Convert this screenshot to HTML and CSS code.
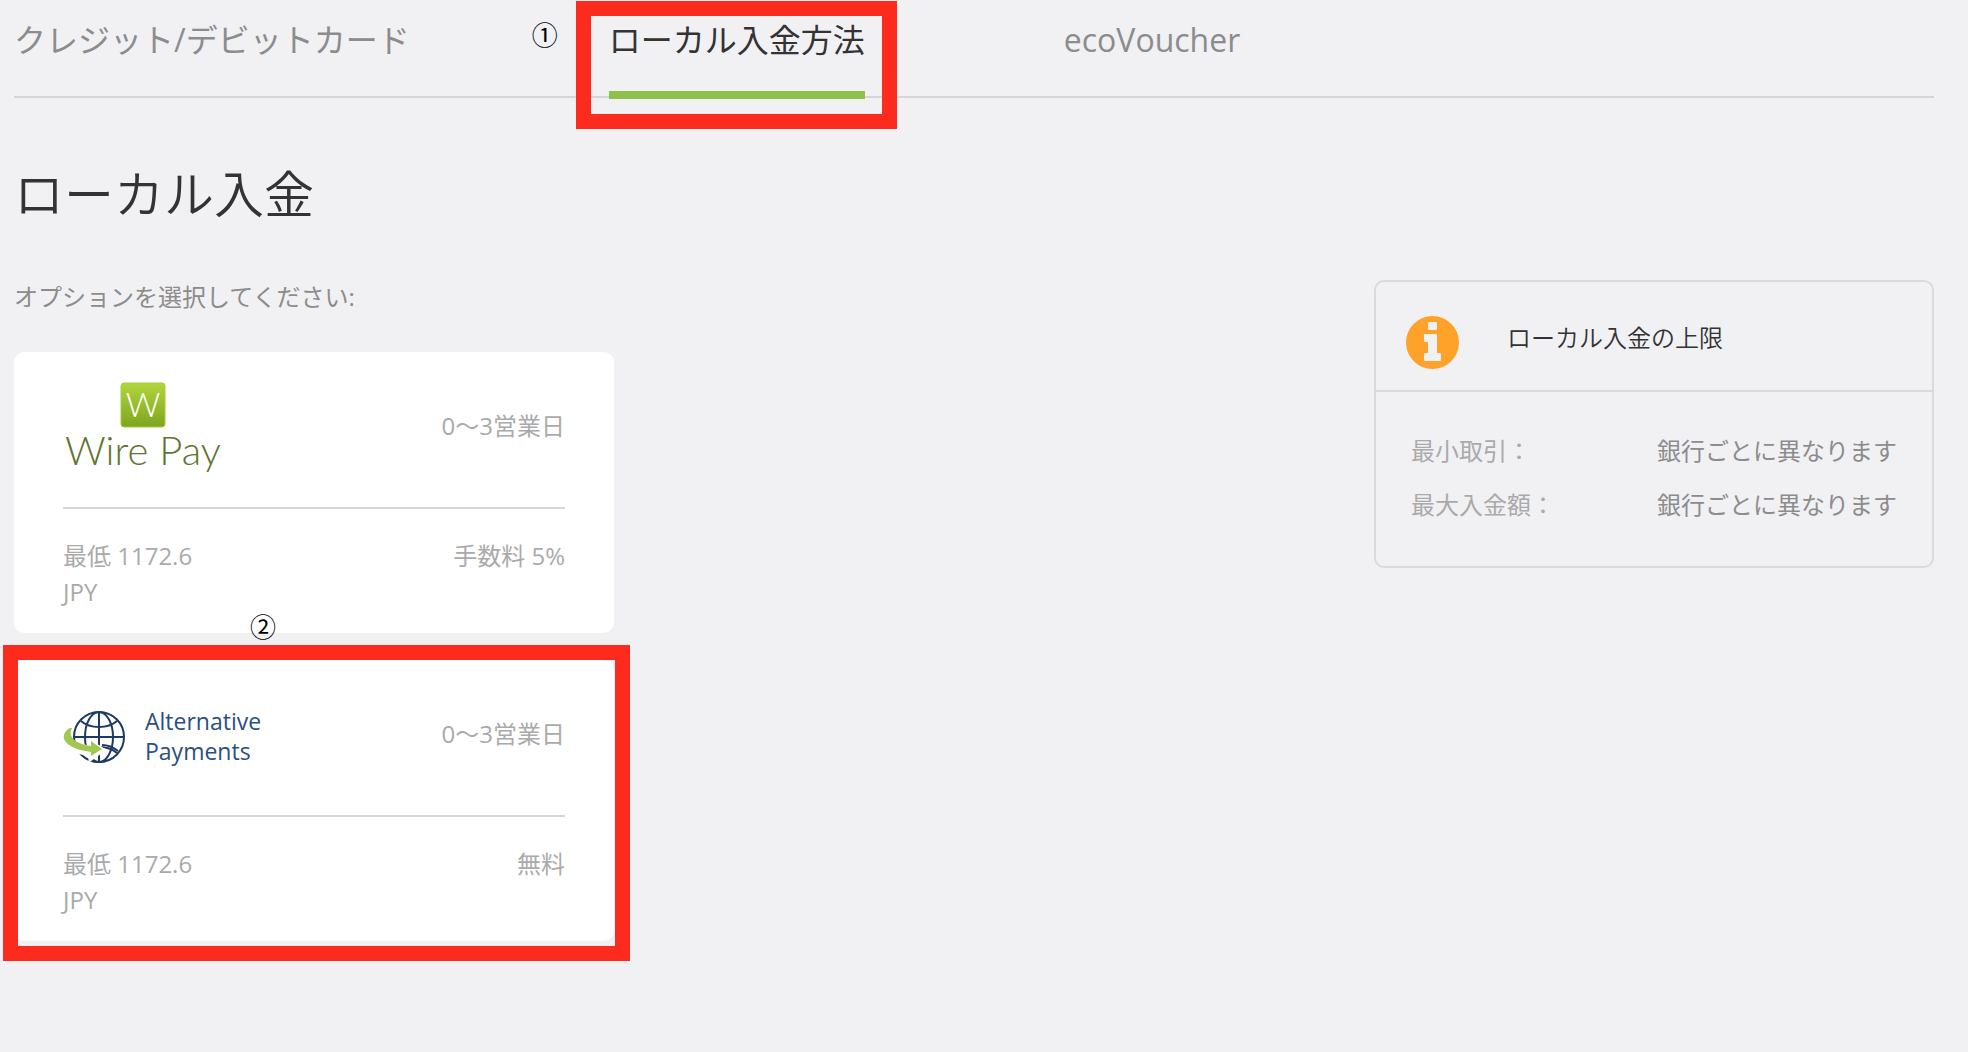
FILE: index.html
```html
<!DOCTYPE html>
<html lang="ja">
<head>
    <meta charset="UTF-8">
    <meta name="viewport" content="width=device-width, initial-scale=1.0">
    <title>ローカル入金</title>
    <link rel="stylesheet" href="styles.css">
</head>
<body>
    <div class="page">
        <nav class="tabs">
            <a class="tab" href="#card">クレジット/デビットカード</a>
            <a class="tab active" href="#local">ローカル入金方法<span class="marker">①</span><span class="highlight"></span></a>
            <a class="tab" href="#ecovoucher">ecoVoucher</a>
        </nav>
        <main>
            <h1>ローカル入金</h1>
            <div class="content">
                <section class="options">
                    <p class="hint">オプションを選択してください:</p>
                    <a class="card" href="#wirepay">
                        <div class="card-top">
                            <div class="wirepay">
                                <svg width="46" height="46" viewBox="0 0 46 46">
                                    <defs>
                                        <linearGradient id="green" x1="0" y1="0" x2="0" y2="1">
                                            <stop offset="0" stop-color="#b0d53c"/>
                                            <stop offset="1" stop-color="#7fa51f"/>
                                        </linearGradient>
                                    </defs>
                                    <rect x="1" y="1" width="44" height="44" rx="3" fill="url(#green)" stroke="#a3cf3a"/>
                                    <text class="wirepay-w" x="23" y="35" text-anchor="middle">W</text>
                                </svg>
                                <span class="wirepay-name">Wire Pay</span>
                            </div>
                            <span class="time">0〜3営業日</span>
                        </div>
                        <div class="card-bottom">
                            <span class="min">最低 1172.6 JPY</span>
                            <span>手数料 5%</span>
                        </div>
                    </a>
                    <a class="card" href="#alternative">
                        <div class="card-top">
                            <div class="alternative">
                                <svg width="62" height="56" viewBox="0 0 62 56" fill="none">
                                    <g stroke="#1d3a63" stroke-width="2">
                                        <circle cx="36" cy="29" r="25"/>
                                        <ellipse cx="36" cy="29" rx="14" ry="25"/>
                                        <path d="M36 4v50M11 29h50"/>
                                        <path d="M18 13c9 8 27 8 36 0M18 45c9-8 27-8 36 0"/>
                                    </g>
                                    <path d="M6 22C-1 35 16 39 28 40v-5l11 7-11 8v-4C14 44 0 40 4 24z" fill="#fff" stroke="#fff" stroke-width="5"/>
                                    <path d="M9 20C4 30 14 36 28 38v-5l11 8-11 7v-4C8 42-7 32 5 21c1-1 2-1 4-1z" fill="#a2c854"/>
                                    <path d="M39 37c7 0 11 2 16 6M36 48v6" stroke="#1d3a63" stroke-width="2"/>
                                </svg>
                                <span>Alternative<br>Payments</span>
                            </div>
                            <span class="time">0〜3営業日</span>
                        </div>
                        <div class="card-bottom">
                            <span class="min">最低 1172.6 JPY</span>
                            <span>無料</span>
                        </div>
                        <span class="marker">②</span>
                        <span class="highlight"></span>
                    </a>
                </section>
                <aside class="limits">
                    <div class="limits-head">
                        <svg width="53" height="53" viewBox="0 0 53 53">
                            <circle cx="26.5" cy="26.5" r="26.5" fill="#ffa229"/>
                            <path d="M22 7q0-1 1-1h7q1 0 1 1v6q0 1-1 1h-7q-1 0-1-1zM18 19q0-1 1-1h11q1 0 1 1v18h3q1 0 1 1v6q0 1-1 1H19q-1 0-1-1v-6q0-1 1-1h3V26h-3q-1 0-1-1z" fill="#f1f1f4"/>
                        </svg>
                        <h2>ローカル入金の上限</h2>
                    </div>
                    <dl>
                        <div class="row">
                            <dt>最小取引：</dt>
                            <dd>銀行ごとに異なります</dd>
                        </div>
                        <div class="row">
                            <dt>最大入金額：</dt>
                            <dd>銀行ごとに異なります</dd>
                        </div>
                    </dl>
                </aside>
            </div>
        </main>
    </div>
</body>
</html>
```
FILE: styles.css
```css
* {
    box-sizing: border-box;
}
body {
    margin: 0;
    background: #f1f1f4;
    color: #333;
    font-family: "Open Sans", "Noto Sans CJK JP", sans-serif;
    font-size: 24px;
    font-weight: 390;
}
a {
    color: inherit;
    text-decoration: none;
}
svg {
    display: block;
    flex-shrink: 0;
}
.page {
    padding: 0 34px 0 14px;
}
.tabs {
    display: flex;
    gap: 199px;
    border-bottom: 2px solid #d6d6d9;
}
.tab {
    position: relative;
    margin-bottom: -3px;
    padding: 16px 0 27px;
    border-bottom: 8px solid transparent;
    font-size: 32px;
    line-height: 48px;
    color: #8c8c8c;
    white-space: nowrap;
}
.tab.active {
    color: #333;
    border-color: #8fc14a;
}

/* step annotations */
.marker {
    position: absolute;
    font-size: 26px;
    line-height: 36px;
    color: #000;
}
.highlight {
    position: absolute;
    border: 15px solid #fd2b1d;
}
.tab .marker {
    top: 17px;
    left: -77px;
}
.tab .highlight {
    top: 1px;
    right: -32px;
    bottom: -38px;
    left: -33px;
}
.card .marker {
    top: -51px;
    left: 236px;
}
.card .highlight {
    top: -15px;
    right: -16px;
    bottom: -20px;
    left: -11px;
}

h1 {
    margin: 60px 0 50px;
    font-size: 50px;
    font-weight: 350;
    line-height: 72px;
}
.content {
    display: flex;
    justify-content: space-between;
    align-items: flex-start;
    gap: 40px;
}
.options {
    width: 600px;
}
.hint {
    margin: 0 0 38px;
    line-height: 34px;
    color: #8c8c8c;
}
.card {
    position: relative;
    display: block;
    margin-bottom: 27px;
    padding: 0 49px 23px;
    background: #fff;
    border-radius: 10px;
    color: #aaa;
    line-height: 36px;
}
.card-top {
    display: flex;
    justify-content: space-between;
    align-items: flex-start;
    height: 157px;
    border-bottom: 2px solid #d6d6d6;
}
.time {
    margin-top: 56px;
}
.card-bottom {
    display: flex;
    justify-content: space-between;
    padding-top: 29px;
}
.min {
    width: 140px;
}
.wirepay {
    display: flex;
    flex-direction: column;
    align-items: center;
    padding: 30px 0 0 2px;
}
.wirepay-w {
    font-family: Lato, sans-serif;
    font-size: 34px;
    font-weight: 300;
    fill: #fff;
}
.wirepay-name {
    font-family: Lato, sans-serif;
    font-size: 40px;
    font-weight: 300;
    line-height: 44px;
    color: #5f7430;
}
.alternative {
    display: flex;
    align-items: center;
    gap: 20px;
    margin-top: 46px;
    font-size: 23px;
    font-weight: 400;
    line-height: 30px;
    color: #2b4f7f;
}

.limits {
    width: 560px;
    border: 2px solid #dadadc;
    border-radius: 10px;
}
.limits-head {
    display: flex;
    gap: 48px;
    padding: 34px 30px 21px;
    border-bottom: 2px solid #dadadc;
}
h2 {
    margin: 0;
    font-size: 24px;
    font-weight: 350;
    line-height: 44px;
}
dl {
    margin: 0;
    padding: 32px 35px 34px;
}
.row {
    display: flex;
    justify-content: space-between;
    line-height: 54px;
}
dt {
    color: #aaa;
}
dd {
    margin: 0;
    color: #8c8c8c;
}
```
